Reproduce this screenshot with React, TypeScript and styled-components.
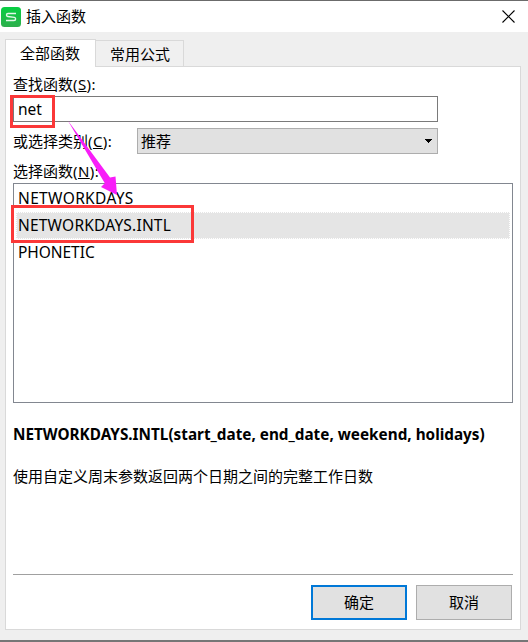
import React, { useState } from 'react';
import styled, { createGlobalStyle } from 'styled-components';

const functions = [
  { name: 'NETWORKDAYS', tracking: 0.35 },
  { name: 'NETWORKDAYS.INTL', tracking: 0.2 },
  { name: 'PHONETIC', tracking: -0.05 },
];

const App: React.FC = () => {
  const [query, setQuery] = useState('net');
  const [selected, setSelected] = useState('NETWORKDAYS.INTL');

  return (
    <>
      <GlobalStyle />
      <StyledDialog>
        <TitleBar />
        <StyledTabs>
          <StyledTab $active>全部函数</StyledTab>
          <StyledTab>常用公式</StyledTab>
        </StyledTabs>
        <StyledPanel>
          <StyledLabel>
            查找函数<AccessKey letter="S" />
          </StyledLabel>
          <StyledInput value={query} onChange={(e) => setQuery(e.target.value)} />
          <StyledCategoryRow>
            <StyledCategoryLabel>
              或选择类别<AccessKey letter="C" />
            </StyledCategoryLabel>
            <StyledSelect>
              推荐
              <svg width="9" height="4" shapeRendering="crispEdges">
                <path d="M0 0H8L4 4Z" fill="#000" />
              </svg>
            </StyledSelect>
          </StyledCategoryRow>
          <StyledLabel>
            选择函数<AccessKey letter="N" />
          </StyledLabel>
          <StyledList>
            {functions.map(({ name, tracking }) => (
              <StyledItem
                key={name}
                $selected={name === selected}
                $tracking={tracking}
                onClick={() => setSelected(name)}
              >
                {name}
              </StyledItem>
            ))}
          </StyledList>
          <StyledSignature>NETWORKDAYS.INTL(start_date, end_date, weekend, holidays)</StyledSignature>
          <StyledDescription>使用自定义周末参数返回两个日期之间的完整工作日数</StyledDescription>
          <StyledFooter>
            <StyledButton $primary>确定</StyledButton>
            <StyledButton>取消</StyledButton>
          </StyledFooter>
        </StyledPanel>
        <StyledMark $left={10} $top={95} $width={45} $height={33} />
        <StyledMark $left={11} $top={205} $width={183} $height={38} />
        <StyledArrow width="60" height="84" viewBox="0 0 60 84">
          <path d="M3.8 2.4L46 59.5L51.5 58.5L53 77L37 69L40.8 65.3Z" fill="#f81df8" />
        </StyledArrow>
      </StyledDialog>
    </>
  );
};

const TitleBar = () => {
  return (
    <StyledTitleBar>
      <svg width="20" height="20" viewBox="0 0 20 20">
        <defs>
          <linearGradient id="logo" x1="0" y1="0" x2="0" y2="1">
            <stop offset="0" stopColor="#06cf42" />
            <stop offset="1" stopColor="#2eae4c" />
          </linearGradient>
        </defs>
        <rect width="20" height="20" rx="3.5" fill="url(#logo)" />
        <path
          d="M15 6.5H7Q5.5 6.5 5.5 8Q5.5 9.3 6.8 9.5L13.4 10.4Q14.6 10.7 14.6 12Q14.6 13.5 13 13.5H5"
          fill="none"
          stroke="#e4f8e9"
          strokeWidth="1.4"
        />
      </svg>
      <StyledTitle>插入函数</StyledTitle>
      <svg width="13" height="13" viewBox="0 0 13 13">
        <path d="M.5 .5L12.5 12.5M12.5 .5L.5 12.5" stroke="#000" strokeWidth="1.1" />
      </svg>
    </StyledTitleBar>
  );
};

const AccessKey: React.FC<{ letter: string }> = ({ letter }) => {
  return (
    <StyledAccessKey>
      (<u>{letter}</u>):
    </StyledAccessKey>
  );
};

const GlobalStyle = createGlobalStyle`
  * {
    box-sizing: border-box;
  }
  body {
    margin: 0;
    overflow: hidden;
    color: #000;
    font: 15px/20px 'Noto Sans', 'Noto Sans CJK SC', sans-serif;
  }
`;

const StyledDialog = styled.div`
  position: relative;
  display: flex;
  flex-direction: column;
  width: 528px;
  height: 642px;
  padding: 0 7px 10px 5px;
  background: #efefef;
  border-top: 1px solid #6b6b6b;
  border-bottom: 2px solid #767676;
`;

const StyledTitleBar = styled.div`
  display: flex;
  align-items: center;
  flex: none;
  height: 31px;
  margin: 0 -7px 0 -5px;
  padding: 0 13px 0 1px;
  background: #fff;
`;

const StyledTitle = styled.div`
  flex: 1;
  margin-left: 5px;
  padding-bottom: 2px;
`;

const StyledTabs = styled.div`
  display: flex;
  align-items: flex-end;
  flex: none;
  height: 34px;
`;

const StyledTab = styled.div<{ $active?: boolean }>`
  z-index: ${(props) => (props.$active ? 1 : 0)};
  width: ${(props) => (props.$active ? 91 : 89)}px;
  height: ${(props) => (props.$active ? 28 : 26)}px;
  margin-left: ${(props) => (props.$active ? 0 : -1)}px;
  margin-bottom: ${(props) => (props.$active ? -1 : 0)}px;
  padding: 3px 0 0 14px;
  border: 1px solid #d9d9d9;
  border-bottom: 0;
  background: ${(props) => (props.$active ? '#fff' : '#f0f0f0')};
`;

const StyledPanel = styled.div`
  display: flex;
  flex-direction: column;
  flex: 1;
  width: 516px;
  padding: 0 7px;
  background: #fff;
  border: 1px solid #d9d9d9;
`;

const StyledLabel = styled.div`
  flex: none;
  height: 29px;
  padding-top: 7px;
`;

const StyledAccessKey = styled.span`
  letter-spacing: 0.4px;
`;

const StyledInput = styled.input`
  flex: none;
  width: 425px;
  height: 26px;
  padding: 0 4px;
  border: 1px solid #7a7a7a;
  outline: 0;
  font: inherit;
  font-size: 15.5px;
`;

const StyledCategoryRow = styled.div`
  display: flex;
  align-items: center;
  flex: none;
  height: 26px;
  margin-top: 6px;
`;

const StyledCategoryLabel = styled.div`
  width: 124px;
`;

const StyledSelect = styled.div`
  display: flex;
  align-items: center;
  justify-content: space-between;
  width: 301px;
  height: 26px;
  padding: 0 4px 0 3px;
  border: 1px solid #adadad;
  background: #e1e1e1;
`;

const StyledList = styled.div`
  flex: none;
  width: 500px;
  height: 220px;
  padding: 1px 2px;
  border: 1px solid #828790;
`;

const StyledItem = styled.div<{ $selected: boolean; $tracking: number }>`
  height: 27px;
  padding: 2px 1px;
  border: 1px dotted ${(props) => (props.$selected ? '#fff' : 'transparent')};
  background: ${(props) => (props.$selected ? '#e5e5e5' : 'transparent')};
  font-size: 15.5px;
  letter-spacing: ${(props) => props.$tracking}px;
`;

const StyledSignature = styled.div`
  margin-top: 21px;
  font-size: 15.3px;
  font-weight: 700;
  white-space: nowrap;
`;

const StyledDescription = styled.div`
  margin-top: 22px;
`;

const StyledFooter = styled.div`
  display: flex;
  justify-content: flex-end;
  gap: 9px;
  width: 500px;
  height: 55px;
  margin-top: auto;
  padding: 10px 1px 0 0;
  border-top: 1px solid #a0a0a0;
`;

const StyledButton = styled.button<{ $primary?: boolean }>`
  width: 96px;
  height: 35px;
  padding: 0 0 2px;
  border: ${(props) => (props.$primary ? '2px solid #0078d7' : '1px solid #adadad')};
  background: #e1e1e1;
  color: #000;
  font: inherit;
`;

// highlight frame laid over the dialog
const StyledMark = styled.div<{ $left: number; $top: number; $width: number; $height: number }>`
  position: absolute;
  z-index: 2;
  left: ${(props) => props.$left}px;
  top: ${(props) => props.$top - 1}px;
  width: ${(props) => props.$width}px;
  height: ${(props) => props.$height}px;
  border: 3px solid #fb3838;
`;

const StyledArrow = styled.svg`
  position: absolute;
  z-index: 3;
  left: 64px;
  top: 117px;
`;

export default App;
